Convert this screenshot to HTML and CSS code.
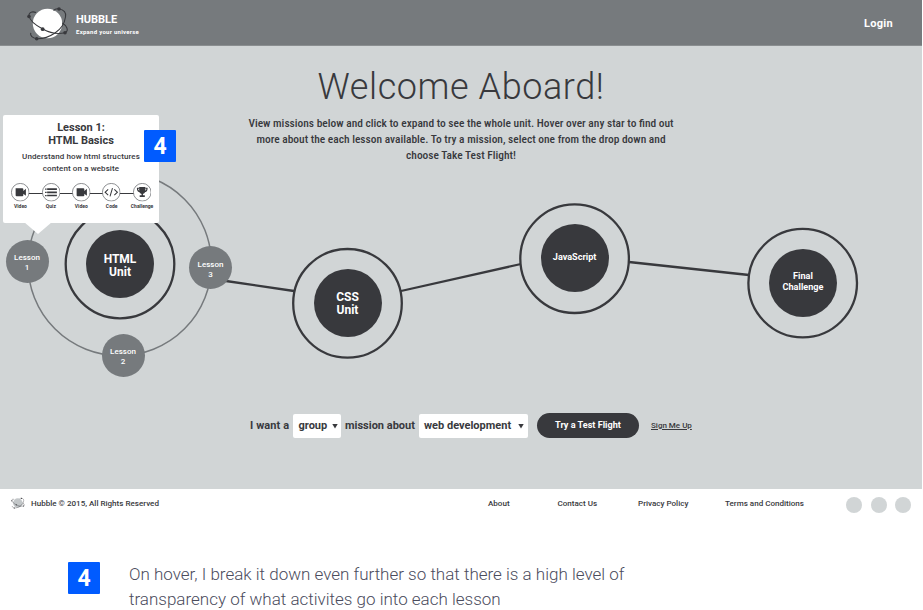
FILE: index.html
```html
<!DOCTYPE html>
<html lang="en">
<head>
<meta charset="utf-8">
<title>Hubble</title>
<link rel="stylesheet" href="styles.css">
</head>
<body>
<svg class="defs" width="0" height="0">
  <symbol id="orbit" viewBox="0 0 42 37">
    <circle class="planet" cx="20.500" cy="18.500" r="14.700"/>
    <g class="paths">
      <path d="M9 7.500C5 6 1.500 7.500 2 11C3 16 9 20.500 15.700 24C23 28 31 29.500 38 27.800C42.500 25.500 39.500 20.500 35.300 18"/>
      <path d="M26.500 5.500C28 4 30 3.500 32 4C37 4.500 39.500 8 38.500 12C37.500 19 34 24 28 28C22 32 15 34 9.700 33.800C5.500 33 3 31 3.700 27.800"/>
    </g>
    <g class="dots"><circle cx="2" cy="11.500" r="1.800"/><circle cx="32" cy="4" r="1.800"/><circle cx="15.700" cy="24.200" r="1.900"/><circle cx="38" cy="27.800" r="1.800"/><circle cx="9.700" cy="33.800" r="1.800"/></g>
  </symbol>
  <symbol id="video" viewBox="0 0 18 18"><circle class="rim" cx="9" cy="9" r="8.600"/><path d="M4.500 5H11q1 0 1 1v1.800L14.500 5.500V12.500L12 10.500V11.900q0 1-1 1H5.500q-1 0-1-1z"/></symbol>
  <symbol id="quiz" viewBox="0 0 18 18"><circle class="rim" cx="9" cy="9" r="8.600"/><path d="M5 5H14.500v1.800H5zM5 8.200H14.500v1.800H5zM5 11.400H14.500v1.600H5zM3 5.300h1.500v1.200H3zM3 8.500h1.500v1.200H3zM3 11.600h1.500v1.200H3z"/></symbol>
  <symbol id="code" viewBox="0 0 18 18"><circle class="rim" cx="9" cy="9" r="8.600"/><path class="stroke" d="M6 6.200L3 9l3 2.800M12 6.200L15 9l-3 2.800M10.200 5L7.800 13"/></symbol>
  <symbol id="trophy" viewBox="0 0 18 18"><circle class="rim" cx="9" cy="9" r="8.600"/><path d="M6 4h6v3q0 3-2.300 3.800V12H11.500v1.500H6.500V12h1.800v-1.200Q6 10 6 7z"/><path class="stroke" d="M6 5H4.300q0 3.200 2.700 3.500M12 5h1.700q0 3.200-2.700 3.500"/></symbol>
</svg>
<div class="site">
  <header class="top">
    <svg class="logo"><use href="#orbit"/></svg>
    <div class="brand"><strong>HUBBLE</strong><small>Expand your universe</small></div>
    <a class="login">Login</a>
  </header>
  <main>
    <h1>Welcome Aboard!</h1>
    <p class="intro"><span>View missions below and click to expand to see the whole unit. Hover over any star to find out</span><br><span>more about the each lesson available. To try a mission, select one from the drop down and</span><br><span>choose Take Test Flight!</span></p>
    <section class="map">
      <svg class="routes" viewBox="0 170 922 225">
        <circle class="orbit" cx="119.700" cy="264" r="91.700"/>
        <path class="route" d="M226 281L294 291M401 291L521 264M629 262L749 275"/>
        <g class="ring"><circle cx="120" cy="264" r="54.300"/><circle cx="347.500" cy="303.300" r="54.300"/><circle cx="574.600" cy="258.700" r="54.300"/><circle cx="802.700" cy="283.100" r="54.300"/></g>
      </svg>
      <div class="unit html">HTML<br>Unit</div>
      <div class="unit css">CSS<br>Unit</div>
      <div class="unit js">JavaScript</div>
      <div class="unit final">Final<br>Challenge</div>
      <div class="lesson one">Lesson<br>1</div>
      <div class="lesson two">Lesson<br>2</div>
      <div class="lesson three">Lesson<br>3</div>
      <article class="popup">
        <h2>Lesson 1:<br>HTML Basics</h2>
        <p>Understand how html structures<br>content on a website</p>
        <ul>
          <li><svg><use href="#video"/></svg>Video</li>
          <li><svg><use href="#quiz"/></svg>Quiz</li>
          <li><svg><use href="#video"/></svg>Video</li>
          <li><svg><use href="#code"/></svg>Code</li>
          <li><svg><use href="#trophy"/></svg>Challenge</li>
        </ul>
      </article>
      <b class="marker pin">4</b>
    </section>
    <form class="picker">
      <span class="lead">I want a</span>
      <span class="select group"><span>group</span><i></i></span>
      <span class="mid">mission about</span>
      <span class="select topic"><span>web development</span><i></i></span>
      <span class="cta">Try a Test Flight</span>
      <a class="signup">Sign Me Up</a>
    </form>
  </main>
  <footer>
    <svg class="mini"><use href="#orbit"/></svg>
    <span class="copy">Hubble © 2015, All Rights Reserved</span>
    <nav><a>About</a><a>Contact Us</a><a>Privacy Policy</a><a>Terms and Conditions</a></nav>
    <div class="social"><i></i><i></i><i></i></div>
  </footer>
</div>
<section class="note">
  <b class="marker">4</b>
  <p>On hover, I break it down even further so that there is a high level of<br>transparency of what activites go into each lesson</p>
</section>
</body>
</html>
```
FILE: styles.css
```css
* { box-sizing: border-box; }
body { margin: 0; background: #fff; color: #38393d; font-family: Roboto, "Liberation Sans", sans-serif; height: 610px; overflow: hidden; }
h1, h2, p, ul { margin: 0; padding: 0; }
.defs { position: absolute; }
.site { width: 922px; }
.top { height: 46px; background: #767a7d; border-bottom: 1px solid #8a8e90; display: flex; align-items: center; padding: 0 29px 0 27px; color: #fff; }
.logo { width: 42px; height: 37px; margin-top: 1px; }
.planet { fill: var(--planet, #fff); }
.paths { fill: none; stroke: #38393d; stroke-width: 1.1; }
.dots { fill: #38393d; }
.brand { margin-left: 7px; padding-top: 6px; display: flex; flex-direction: column; }
.brand strong { font-size: 11px; line-height: 13px; font-weight: 700; }
.brand small { font-size: 6px; line-height: 12px; font-weight: 700; letter-spacing: .27px; }
.login { margin-left: auto; padding-top: 2px; font-size: 11px; font-weight: 700; letter-spacing: .3px; }
main { height: 443px; background: #d1d5d6; }
h1 { padding-top: 19px; height: 69px; line-height: 44px; font-size: 36px; font-weight: 300; text-align: center; letter-spacing: .57px; }
.intro { height: 55px; font-size: 11.450px; line-height: 16px; font-weight: 500; text-align: center; font-stretch: 75%; white-space: nowrap; }
.map { position: relative; height: 225px; }
.routes { display: block; width: 922px; height: 225px; }
.orbit { fill: none; stroke: #767a7d; stroke-width: 1.5; }
.route, .ring { fill: none; stroke: #38393d; stroke-width: 2.3; }
.unit, .lesson { position: absolute; display: flex; align-items: center; justify-content: center; text-align: center; border-radius: 50%; color: #fff; }
.unit { width: 68px; height: 68px; background: #38393d; font-size: 12px; line-height: 13px; font-weight: 700; }
.html { left: 86px; top: 60px; padding-top: 4px; }
.css { left: 313.500px; top: 99px; padding-top: 2px; }
.js { left: 540.600px; top: 54px; font-size: 9.100px; padding-bottom: 1px; }
.final { left: 769px; top: 79px; font-size: 9.100px; line-height: 11px; padding-bottom: 3px; }
.lesson { width: 43px; height: 43px; background: #767a7d; font-size: 8px; line-height: 10px; font-weight: 500; }
.one { left: 5.500px; top: 70px; padding-top: 3px; }
.two { left: 101.500px; top: 164px; padding-top: 3px; }
.three { left: 189px; top: 76px; padding-top: 4px; }
.popup { position: absolute; left: 3px; top: -55px; width: 156px; height: 108px; background: #fff; border-radius: 2px; text-align: center; padding-top: 6px; }
.popup::after { content: ""; position: absolute; left: 21px; top: 107px; width: 28px; height: 12px; background: #fff; clip-path: polygon(0 0, 100% 0, 50% 100%); }
.popup h2 { font-size: 11px; line-height: 13px; font-weight: 700; }
.popup p { margin-top: 4px; font-size: 8px; line-height: 12px; font-weight: 500; letter-spacing: .1px; white-space: nowrap; }
.popup ul { position: relative; display: flex; margin: 8px 1.700px 0 2.300px; list-style: none; }
.popup ul::before { content: ""; position: absolute; left: 15px; right: 15px; top: 10px; height: 1px; background: #38393d; }
.popup li { width: 30.400px; display: flex; flex-direction: column; align-items: center; position: relative; font-size: 5px; line-height: 6px; font-weight: 700; }
.popup li svg { width: 18.500px; height: 18.500px; margin-bottom: 1px; fill: #38393d; }
.rim { fill: #fff; stroke: #626468; stroke-width: .7; }
.stroke { fill: none; stroke: #38393d; stroke-width: 1; }
.marker { width: 32px; height: 32px; background: #005bff; color: #fff; font-size: 23px; line-height: 33px; font-weight: 700; text-align: center; border-radius: 1px; }
.pin { position: absolute; left: 144px; top: -40px; }
.picker { display: flex; align-items: center; height: 25px; margin: 18px 0 0 250px; font-size: 11px; font-weight: 700; white-space: nowrap; }
.lead { width: 43px; letter-spacing: .1px; }
.select { display: flex; align-items: center; justify-content: space-between; height: 24px; background: #fff; border-radius: 2px; padding: 0 4px 0 6px; }
.select i { width: 6px; height: 5px; margin-top: 1px; background: #38393d; clip-path: polygon(0 0, 100% 0, 50% 100%); }
.group { width: 48px; padding: 0 3px 0 5.500px; }
.mid { width: 72px; margin: 0 2px 0 4px; }
.topic { width: 109px; padding-left: 5px; }
.cta { width: 102px; height: 25px; border-radius: 13px; background: #38393d; color: #fff; font-size: 9.100px; line-height: 25px; text-align: center; margin-left: 9px; }
.signup { font-size: 8px; font-weight: 500; text-decoration: underline; margin-left: 12px; }
footer { display: flex; height: 41px; padding: 6px 11px 0; align-items: flex-start; font-size: 8.050px; line-height: 17px; font-weight: 500; }
.mini { width: 14px; height: 12px; margin-top: 2px; --planet: #c3c7c9; }
.copy { margin-left: 6px; width: 457px; }
nav { display: flex; width: 358px; white-space: nowrap; }
nav a:nth-child(1) { width: 69.500px; }
nav a:nth-child(2) { width: 80.500px; }
nav a:nth-child(3) { width: 87px; }
.social { display: flex; gap: 8.500px; margin-top: 2px; }
.social i { width: 16px; height: 16px; border-radius: 50%; background: #d1d5d6; }
.note { display: flex; padding: 32px 0 0 68px; color: #4b4c5d; }
.note p { margin-left: 29px; font-size: 17px; line-height: 25px; font-weight: 300; white-space: nowrap; }
```
